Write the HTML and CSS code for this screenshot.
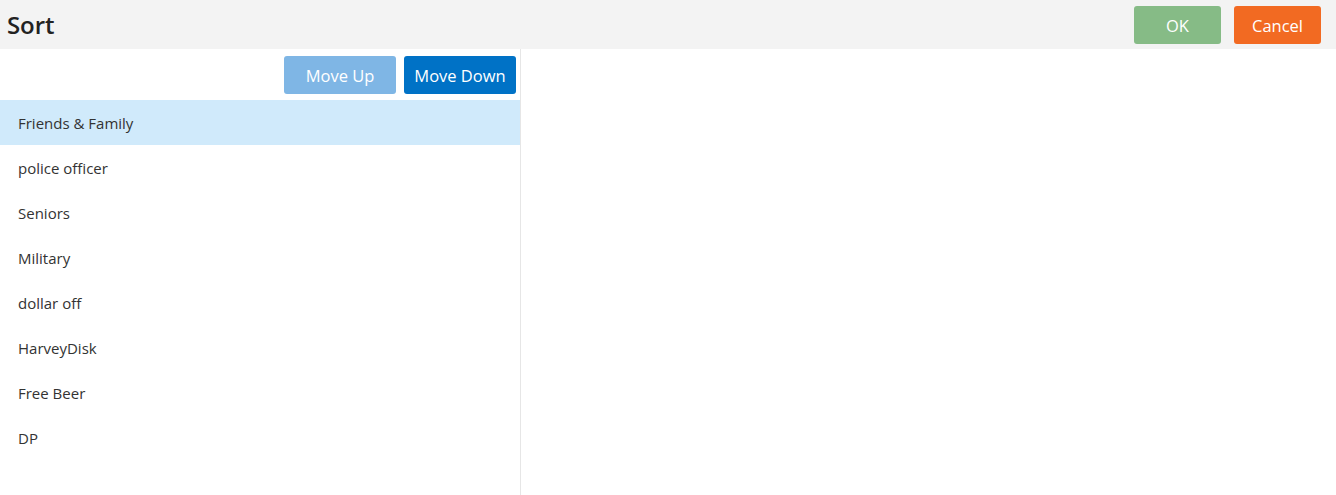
FILE: index.html
```html
<!DOCTYPE html>
<html lang="en">
<head>
<meta charset="UTF-8" />
<meta name="viewport" content="width=device-width,initial-scale=1.0" />
<title>Sort</title>
<link rel="stylesheet" href="styles.css">
</head>
<body>

<header class="bar">
  <h1>Sort</h1>
  <div class="actions">
    <button class="btn btn-ok">OK</button>
    <button class="btn btn-cancel">Cancel</button>
  </div>
</header>

<div class="body">
  <section class="panel">
    <div class="tools">
      <button class="btn btn-up" disabled>Move Up</button>
      <button class="btn btn-down">Move Down</button>
    </div>
    <ul class="list">
      <li class="active">Friends &amp; Family</li>
      <li>police officer</li>
      <li>Seniors</li>
      <li>Military</li>
      <li>dollar off</li>
      <li>HarveyDisk</li>
      <li>Free Beer</li>
      <li>DP</li>
    </ul>
  </section>
</div>

</body>
</html>
```

FILE: styles.css
```css
*{box-sizing:border-box;margin:0;padding:0}
html,body{height:100%}
body{
  font-family:"Open Sans","Noto Sans",sans-serif;
  background:#fff;color:#333;
  display:flex;flex-direction:column
}
.bar{
  height:49px;background:#f3f3f3;
  display:flex;align-items:center;justify-content:space-between;
  padding:0 15px 0 7px
}
.bar h1{font-size:24px;font-weight:600;color:#222;letter-spacing:-.1px}
.actions{display:flex;gap:13px;padding-top:1px}
.btn{
  height:38px;border:none;border-radius:3px;color:#fff;
  font-family:inherit;font-size:16.5px;cursor:pointer
}
.btn-ok{width:87px;background:#86bb86}
.btn-cancel{width:87px;background:#f26a22}
.body{flex:1;display:flex}
.panel{width:521px;border-right:1px solid #e6e6e6;display:flex;flex-direction:column}
.tools{display:flex;justify-content:flex-end;gap:8px;padding:7px 4px 6px 0}
.btn-up{width:112px;background:#7fb6e5}
.btn-down{width:112px;background:#0072c6}
.list{list-style:none}
.list li{height:45px;line-height:46px;padding-left:18px;font-size:15px;color:#333}
.list li.active{background:#d0eafb}
```
